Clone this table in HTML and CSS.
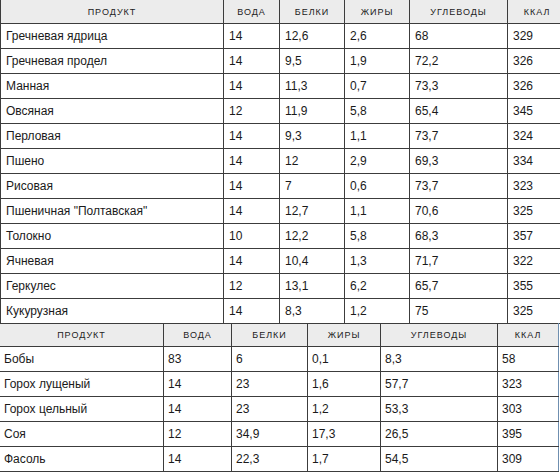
FILE: index.html
```html
<!DOCTYPE html>
<html lang="ru">
<head>
<meta charset="utf-8">
<link rel="stylesheet" href="styles.css">
</head>
<body>
<div class="page">
<table class="grid grid-top">
  <colgroup>
    <col class="t1"><col class="t2"><col class="t3"><col class="t4"><col class="t5"><col class="t6">
  </colgroup>
  <thead>
    <tr><th>ПРОДУКТ</th><th>ВОДА</th><th>БЕЛКИ</th><th>ЖИРЫ</th><th>УГЛЕВОДЫ</th><th>ККАЛ</th></tr>
  </thead>
  <tbody>
    <tr><td>Гречневая ядрица</td><td>14</td><td>12,6</td><td>2,6</td><td>68</td><td>329</td></tr>
    <tr><td>Гречневая продел</td><td>14</td><td>9,5</td><td>1,9</td><td>72,2</td><td>326</td></tr>
    <tr><td>Манная</td><td>14</td><td>11,3</td><td>0,7</td><td>73,3</td><td>326</td></tr>
    <tr><td>Овсяная</td><td>12</td><td>11,9</td><td>5,8</td><td>65,4</td><td>345</td></tr>
    <tr><td>Перловая</td><td>14</td><td>9,3</td><td>1,1</td><td>73,7</td><td>324</td></tr>
    <tr><td>Пшено</td><td>14</td><td>12</td><td>2,9</td><td>69,3</td><td>334</td></tr>
    <tr><td>Рисовая</td><td>14</td><td>7</td><td>0,6</td><td>73,7</td><td>323</td></tr>
    <tr><td>Пшеничная "Полтавская"</td><td>14</td><td>12,7</td><td>1,1</td><td>70,6</td><td>325</td></tr>
    <tr><td>Толокно</td><td>10</td><td>12,2</td><td>5,8</td><td>68,3</td><td>357</td></tr>
    <tr><td>Ячневая</td><td>14</td><td>10,4</td><td>1,3</td><td>71,7</td><td>322</td></tr>
    <tr><td>Геркулес</td><td>12</td><td>13,1</td><td>6,2</td><td>65,7</td><td>355</td></tr>
    <tr><td>Кукурузная</td><td>14</td><td>8,3</td><td>1,2</td><td>75</td><td>325</td></tr>
  </tbody>
</table>
<table class="grid grid-bottom">
  <colgroup>
    <col class="b1"><col class="b2"><col class="b3"><col class="b4"><col class="b5"><col class="b6">
  </colgroup>
  <thead>
    <tr><th>ПРОДУКТ</th><th>ВОДА</th><th>БЕЛКИ</th><th>ЖИРЫ</th><th>УГЛЕВОДЫ</th><th>ККАЛ</th></tr>
  </thead>
  <tbody>
    <tr><td>Бобы</td><td>83</td><td>6</td><td>0,1</td><td>8,3</td><td>58</td></tr>
    <tr><td>Горох лущеный</td><td>14</td><td>23</td><td>1,6</td><td>57,7</td><td>323</td></tr>
    <tr><td>Горох цельный</td><td>14</td><td>23</td><td>1,2</td><td>53,3</td><td>303</td></tr>
    <tr><td>Соя</td><td>12</td><td>34,9</td><td>17,3</td><td>26,5</td><td>395</td></tr>
    <tr><td>Фасоль</td><td>14</td><td>22,3</td><td>1,7</td><td>54,5</td><td>309</td></tr>
  </tbody>
</table>
</div>
</body>
</html>
```

FILE: styles.css
```css
html, body {
  margin: 0;
  padding: 0;
  background: #ffffff;
}

.page {
  width: 560px;
  height: 473px;
  overflow: hidden;
  font-family: "Liberation Sans", Arial, sans-serif;
  color: #1a1a1a;
}

.grid {
  border-collapse: collapse;
  table-layout: fixed;
}

.grid th,
.grid td {
  border: 1px solid #3c3c3c;
  padding: 0;
  white-space: nowrap;
  overflow: hidden;
}

.grid th {
  background: #ececec;
  font-weight: normal;
  font-size: 9px;
  letter-spacing: 1px;
  text-align: center;
  color: #222;
}

.grid td {
  font-size: 12px;
  text-align: left;
}

/* top table */
.grid-top {
  width: 566px;
}
.grid-top thead th {
  border-top: none;
  height: 23px;
}
.grid-top td {
  height: 24px;
  padding-left: 5px;
}
.grid-top td:first-child {
  padding-left: 5px;
}
.t1 { width: 223px; }
.t2 { width: 56px; }
.t3 { width: 65px; }
.t4 { width: 65px; }
.t5 { width: 98px; }
.t6 { width: 59px; }

/* bottom table */
.grid-bottom {
  width: 559px;
  margin-left: -1px;
  margin-top: -1px;
}
.grid-bottom th {
  height: 22px;
}
.grid-bottom td {
  height: 24px;
  padding-left: 4px;
}
.grid-bottom th:last-child,
.grid-bottom td:last-child {
  border-right-color: #6f8fb0;
}
.b1 { width: 164px; }
.b2 { width: 68px; }
.b3 { width: 76px; }
.b4 { width: 73px; }
.b5 { width: 117px; }
.b6 { width: 61px; }
```
